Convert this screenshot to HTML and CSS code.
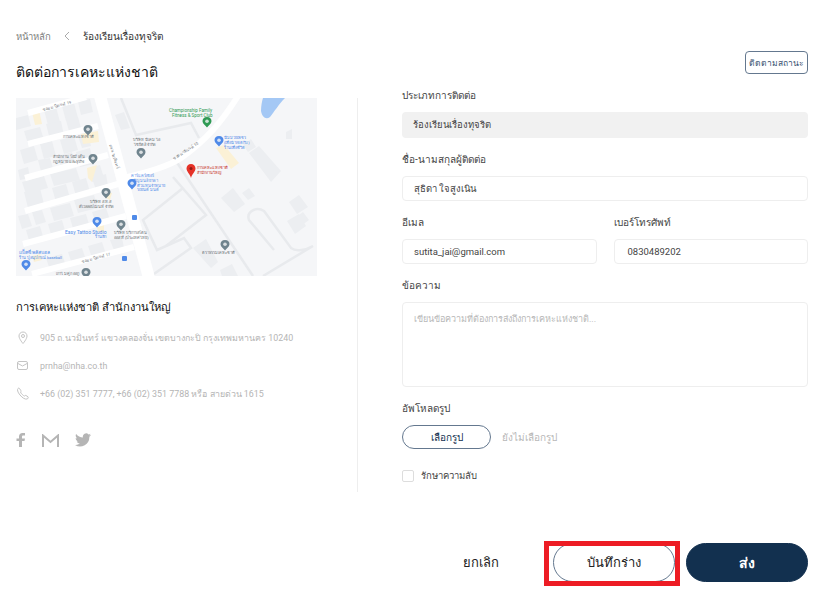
FILE: index.html
```html
<!DOCTYPE html>
<html lang="th">
<head>
  <meta charset="UTF-8" />
  <meta name="viewport" content="width=device-width, initial-scale=1.0"/>
  <title>ติดต่อการเคหะแห่งชาติ</title>
  <link rel="stylesheet" href="styles.css">
</head>
<body>
  <nav class="crumbs">
    <span class="crumb-home">หน้าหลัก</span>
    <svg class="crumb-sep" width="6" height="10" viewBox="0 0 6 10"><path d="M5 1 1 5l4 4"/></svg>
    <span class="crumb-here">ร้องเรียนเรื่องทุจริต</span>
  </nav>

  <main class="page">
    <section class="side">
      <h1 class="title">ติดต่อการเคหะแห่งชาติ</h1>
      <div class="side-body">
        <svg class="map" width="301" height="178" viewBox="0 0 301 178">
          <defs>
            <path id="pin" d="M0 0C-3 0-4.500 2-4.500 4.200-4.500 6.500-1.500 8.500 0 10.500 1.500 8.500 4.500 6.500 4.500 4.200 4.500 2 3 0 0 0Z"/>
            <g id="pin-dot"><use href="#pin"/><circle cx="0" cy="4.200" r="1.800" fill="#f5f6f8" fill-opacity=".8"/></g>
          </defs>
          <rect class="m-bg" width="301" height="178"/>
          <!-- blocks -->
          <g class="m-block">
            <path d="M0 20 12 17 15 28 0 32Z M28 12 40 9 44 24 32 27Z M46 8 58 5 62 20 50 23Z M62 4 74 1 77 14 65 17Z"/>
            <path d="M8 33 24 29 28 42 12 46Z M30 26 45 23 48 38 34 42Z M50 22 62 19 66 34 54 37Z"/>
            <path d="M4 52 18 48 22 62 8 66Z M24 46 36 43 40 58 28 61Z M44 42 58 38 62 52 48 56Z M62 38 72 35 75 48 66 50Z"/>
            <path d="M2 72 12 69 14 80 4 82Z M22 62 34 60 38 74 26 77Z M42 58 56 54 60 68 46 72Z M60 54 74 50 78 66 64 69Z"/>
            <path d="M6 84 28 78 32 90 10 96Z M34 76 60 70 64 82 38 88Z M72 70 84 67 88 80 76 84Z"/>
            <path d="M2 118 12 116 16 128 6 131Z M16 114 26 112 30 124 20 127Z M34 110 54 105 58 118 38 123Z M58 102 78 97 82 110 62 115Z"/>
            <path d="M8 94 24 90 28 106 12 110Z M36 90 50 86 54 100 40 104Z M56 84 70 80 74 94 60 98Z M76 80 90 76 92 88 80 92Z"/>
            <path d="M10 132 24 128 28 142 14 146Z M32 126 46 122 50 136 36 140Z M54 120 70 116 74 130 58 134Z M76 114 90 110 94 122 80 126Z"/>
            <path d="M30 160 46 156 50 168 34 172Z M52 154 66 150 70 162 56 166Z M72 148 86 144 90 156 76 160Z M94 142 106 140 108 150 98 152Z"/>
            <path d="M99 17 108 14 114 30 105 32Z"/>
            <path d="M205 100 217 90 229 106 218 114Z M177 150 190 141 202 164 195 170Z M204 172 216 166 222 178 206 178Z"/>
            <path d="M226 95 233 90 239 98 232 102Z M273 104 283 97 292 109 281 116Z M279 120 287 114 293 122 285 128Z"/>
            <path d="M227 47 235 41 240 49 232 54Z M233 55 243 48 265 73 255 84Z M271 123 283 116 290 128 279 136Z"/>
            <path d="M270 34 276 31 276 41 270 41Z"/>
          </g>
          <!-- yellow lots -->
          <g class="m-lot">
            <path d="M16 14 23 12 26 26 19 27Z M65 36 82 33 83 44 67 46Z M71 70 81 67 76 84 72 80Z"/>
            <path d="M90 94 96 95 94 102 90 100Z M80 126 88 125 88 134 82 134Z"/>
            <path d="M200 50 208 47 223 65 215 71Z"/>
            <path d="M16 158 24 156 26 162 18 164Z"/>
          </g>
          <!-- minor roads -->
          <g class="m-minor">
            <path d="M105 0 120 37 175 25 183 40"/>
            <path d="M160 63 237 178"/>
            <path d="M157 79 190 117 150 148"/>
            <path d="M167 90 127 122 141 152 168 140 175 150 135 178"/>
          </g>
          <path class="m-minor" d="M258 152 233 122C230 114 240 108 248 113L275 150C280 154 290 152 297 148L247 178"/>
          <!-- main roads -->
          <path class="m-road-wide" d="M84 -2 133 180"/>
          <path class="m-road" d="M222 -2C205 25 190 42 165 60 150 70 125 76 107 80"/>
          <g class="m-road">
            <path d="M12 15 70 -1"/>
            <path d="M12 46 82 28"/>
            <path d="M9 80 92 57"/>
            <path d="M9 113 102 86"/>
            <path d="M7 146 110 118"/>
            <path d="M16 176 118 149"/>
          </g>
          <path class="m-water" d="M247 0H269C263 6 258 14 254 19 250 22 246 19 245 13 245 8 246 3 247 0Z"/>
          <!-- labels -->
          <g class="m-road-label">
            <text transform="translate(27 13) rotate(-15)">ซอย มาลีนนท์ 19</text>
            <text transform="translate(93 47) rotate(72)">ถนน ร่มเย็นทร์</text>
            <text transform="translate(158 62) rotate(-33)">ซอย มาลีนนท์ 10</text>
            <text transform="translate(66 165) rotate(-15)">ซอย มาลีนนท์ 17</text>
          </g>
          <g class="m-gray">
            <text x="47" y="40">การเคหะแห่งชาติ</text>
            <text x="37" y="60">สำนักงาน โฮมี เด้น</text>
            <text x="37" y="65">กฎหมาย และธุรกิจ</text>
            <text x="117" y="43">บริษัท นิเคม ไอ</text>
            <text x="118" y="48">ไซยีตส์ จำกัด</text>
            <text x="74" y="105">บริษัท ส.ท.ส</text>
            <text x="63" y="110">ดีเวลลอปเมนท์ จำกัด</text>
            <text x="98" y="136">บริษัท บริการสโตน</text>
            <text x="98" y="141">ออส ที (ประเทศไทย)</text>
            <text x="186" y="156">ตราธรรมเคหะชาติ</text>
            <text x="40" y="177">เกาไ มศูก ออกู</text>
          </g>
          <g class="m-blue">
            <text x="115" y="79">คาร์แคร์เซอร์</text>
            <text x="115" y="84">เจริญ มนส์ ยาดา</text>
            <text x="121" y="89">ตัวแทนจำหน่าย</text>
            <text x="121" y="93">รถยนต์ มนต์</text>
            <text x="208" y="41">นิมม่วยเพชร</text>
            <text x="208" y="46">(เพื่อนำเขตกับ)</text>
            <text x="208" y="51">ร้านเพื่อชีวิต</text>
            <text class="m-blue-big" x="49" y="136">Easy Tattoo Studio</text>
            <text x="79" y="140">ร้านสัก</text>
            <text class="m-blue-big" x="3" y="156">แบ็คซี่ พลัสบอล</text>
            <text x="3" y="161">ร้าน ปูลนุปกรณ์ baseball</text>
          </g>
          <g class="m-green">
            <text x="153" y="14">Championship Family</text>
            <text x="156" y="18.500">Fitness &amp; Sport Club</text>
          </g>
          <g class="m-red">
            <text x="181" y="71">การเคหะแห่งชาติ</text>
            <text x="181" y="76">สำนักงานใหญ่</text>
          </g>
          <!-- pins -->
          <g class="m-pin-gray">
            <use href="#pin-dot" x="72" y="27"/>
            <use href="#pin-dot" x="77" y="56"/>
            <use href="#pin-dot" x="125" y="50"/>
            <use href="#pin-dot" x="90" y="90"/>
            <use href="#pin-dot" x="105" y="122"/>
            <use href="#pin-dot" x="209" y="142"/>
            <use href="#pin-dot" x="70" y="170"/>
          </g>
          <use class="m-pin-green" href="#pin-dot" x="191" y="19"/>
          <g class="m-pin-blue">
            <use href="#pin-dot" x="203" y="38"/>
            <use href="#pin-dot" x="116" y="81"/>
            <use href="#pin-dot" x="81" y="119"/>
            <use href="#pin-dot" x="10" y="162"/>
            <rect x="116" y="117" width="5" height="5" rx="1"/>
            <rect x="106" y="158" width="5" height="5" rx="1"/>
          </g>
          <path class="m-pin-red" d="M175 66C172.500 66 170.500 68 170.500 70.500 170.500 73.500 174 76 175 80 176 76 179.500 73.500 179.500 70.500 179.500 68 177.500 66 175 66Z"/>
          <circle class="m-pin-dot" cx="175" cy="70.500" r="1.500"/>
        </svg>

        <h2 class="office">การเคหะแห่งชาติ สำนักงานใหญ่</h2>
        <ul class="contact">
          <li>
            <svg class="contact-icon" width="14" height="14" viewBox="0 0 14 14"><path d="M7 1C4.500 1 3 3 3 5 3 8 7 12.500 7 12.500S11 8 11 5C11 3 9.500 1 7 1Z"/><circle cx="7" cy="5" r="1.500"/></svg>
            <span>905 ถ.นวมินทร์ แขวงคลองจั่น เขตบางกะปิ กรุงเทพมหานคร 10240</span>
          </li>
          <li>
            <svg class="contact-icon" width="14" height="14" viewBox="0 0 14 14"><rect x="1.500" y="2.500" width="10" height="8" rx="1.500"/><path d="M2 4.500 6.500 7 11 4.500"/></svg>
            <span>prnha@nha.co.th</span>
          </li>
          <li>
            <svg class="contact-icon" width="14" height="14" viewBox="0 0 14 14"><path d="M2 1.500C1 2.500 1.500 5 4 8s5 4.500 7 4c1.200-.3 1.500-1.500 1-2.200L10 8.500c-.5-.3-1 0-1.500.5C7.500 9 5 6.500 4.500 5c.5-.5.700-1 .3-1.500L3.500 1.500C3.100 1 2.500 1 2 1.500Z"/></svg>
            <span>+66 (02) 351 7777, +66 (02) 351 7788 หรือ สายด่วน 1615</span>
          </li>
        </ul>
        <div class="social">
          <svg width="10" height="14" viewBox="0 0 10 14"><path d="M3 14V8H.5V5.500H3V3.500C3 1.200 4.400 0 6.400 0H9v2.500H7.400C6.400 2.500 6 3 6 3.800v1.700h3L8.500 8H6v6Z"/></svg>
          <svg width="17" height="13" viewBox="0 0 17 13"><path class="social-m" d="M1 13V1.500L8.500 8 16 1.500V13"/></svg>
          <svg width="16" height="14" viewBox="0 0 24 20"><path d="M24 2.400c-.9.400-1.800.7-2.800.8 1-.6 1.800-1.600 2.200-2.700-1 .6-2 1-3.100 1.200A4.900 4.900 0 0 0 11.900 6.200C7.800 6 4.200 4 1.700.9c-1.300 2.300-.6 5.200 1.500 6.600-.8 0-1.600-.2-2.200-.6 0 2.400 1.700 4.500 3.900 5-.7.200-1.500.2-2.200.1.600 2 2.400 3.400 4.600 3.400A9.900 9.900 0 0 1 0 17.400 14 14 0 0 0 21.500 5c1-.7 1.800-1.600 2.500-2.600Z"/></svg>
        </div>
      </div>
    </section>

    <section class="main-col">
      <div class="status-row"><button class="status-btn" type="button">ติดตามสถานะ</button></div>
      <form class="form">
        <div class="field">
          <label>ประเภทการติดต่อ</label>
          <div class="box box-off">ร้องเรียนเรื่องทุจริต</div>
        </div>
        <div class="field">
          <label>ชื่อ-นามสกุลผู้ติดต่อ</label>
          <div class="box">สุธิดา ใจสูงเนิน</div>
        </div>
        <div class="field-row">
          <div class="field">
            <label>อีเมล</label>
            <div class="box">sutita_jai@gmail.com</div>
          </div>
          <div class="field">
            <label>เบอร์โทรศัพท์</label>
            <div class="box box-phone">0830489202</div>
          </div>
        </div>
        <div class="field">
          <label>ข้อความ</label>
          <div class="box box-area">เขียนข้อความที่ต้องการส่งถึงการเคหะแห่งชาติ...</div>
        </div>
        <div class="field">
          <label>อัพโหลดรูป</label>
          <div class="upload">
            <button class="pick-btn" type="button">เลือกรูป</button>
            <span class="pick-note">ยังไม่เลือกรูป</span>
          </div>
        </div>
        <div class="secret">
          <span class="check"></span>
          <span>รักษาความลับ</span>
        </div>
      </form>
      <div class="actions">
        <button class="act act-cancel" type="button">ยกเลิก</button>
        <div class="draft-wrap">
          <button class="act act-draft" type="button">บันทึกร่าง</button>
          <span class="red-mark"></span>
        </div>
        <button class="act act-send" type="button">ส่ง</button>
      </div>
    </section>
  </main>
</body>
</html>
```

FILE: styles.css
```css
* {
  box-sizing: border-box;
}

body {
  margin: 0;
  height: 610px;
  overflow: hidden;
  background: #fff;
  color: #222;
  font-family: "Roboto", "Noto Sans", sans-serif;
  font-size: 10px;
}

.crumbs {
  display: flex;
  align-items: center;
  height: 14px;
  margin: 29px 0 0 16px;
}

.crumb-home {
  color: #808080;
  font-size: 9.500px;
}

.crumb-sep {
  margin: 0 13px;
  fill: none;
  stroke: #aaa;
}

.crumb-here {
  color: #333;
  font-size: 10.100px;
}

.page {
  display: flex;
  gap: 44px;
  padding: 8px 28px 0 16px;
}

.side {
  width: 342px;
}

.title {
  height: 47px;
  margin: 0;
  padding-top: 11px;
  color: #111;
  font-size: 14px;
  font-weight: 500;
  line-height: 20px;
}

.side-body {
  height: 394px;
  border-right: 1px solid #eee;
}

.map {
  display: block;
}

.m-bg {
  fill: #f5f6f8;
}

.m-block {
  fill: #eceef1;
}

.m-lot {
  fill: #fbf1d6;
}

.m-minor {
  fill: none;
  stroke: #e8eaed;
  stroke-width: 2.500;
}

.m-road, .m-road-wide {
  fill: none;
  stroke: #fff;
  stroke-width: 6;
}

.m-road-wide {
  stroke-width: 12;
}

.m-water {
  fill: #a4c8f5;
}

.m-road-label text, .m-gray text, .m-blue text, .m-green text, .m-red text {
  font-family: "Roboto", sans-serif;
  font-size: 4px;
}

.m-road-label, .m-gray {
  fill: #6d7378;
}

.m-blue {
  fill: #4f8ae8;
}

.m-blue .m-blue-big {
  font-size: 5px;
}

.m-green {
  fill: #2f9a54;
}

.m-green text {
  font-size: 4.500px;
}

.m-red {
  fill: #c5302a;
}

.m-pin-gray {
  fill: #70848e;
}

.m-pin-green {
  fill: #2f9a54;
}

.m-pin-blue {
  fill: #4f8ae8;
}

.m-pin-red {
  fill: #e53228;
}

.m-pin-dot {
  fill: #8e1c16;
}

.office {
  margin: 23px 0 0;
  color: #111;
  font-size: 11.200px;
  font-weight: 500;
  line-height: 18px;
}

.contact {
  margin: 7px 0 0;
  padding: 0;
  list-style: none;
  color: #b5b5b5;
  font-size: 8.900px;
}

.contact li {
  display: flex;
  align-items: center;
  gap: 10px;
  height: 28px;
}

.contact-icon {
  flex: none;
  fill: none;
  stroke: #c4c4c4;
}

.social {
  display: flex;
  align-items: center;
  gap: 16px;
  margin-top: 25px;
}

.social svg {
  fill: #b5b5b5;
}

.social .social-m {
  fill: none;
  stroke: #b5b5b5;
  stroke-width: 2;
}

.main-col {
  width: 406px;
}

.status-row {
  display: flex;
  justify-content: flex-end;
  height: 37px;
}

.status-btn {
  width: 63px;
  height: 23px;
  padding: 0;
  border: 1px solid #64788f;
  border-radius: 4px;
  background: #fff;
  color: #3a5272;
  font: inherit;
  font-size: 8.500px;
}

.form {
  display: flex;
  flex-direction: column;
  gap: 14px;
}

.field {
  display: flex;
  flex-direction: column;
  flex: 1;
}

.field label {
  height: 24px;
  color: #444;
  line-height: 16px;
}

.field-row {
  display: flex;
  gap: 17px;
}

.box {
  height: 25px;
  padding: 0 11px;
  border: 1px solid #eee;
  border-radius: 4px;
  color: #444;
  font-size: 9.500px;
  line-height: 23px;
}

.box-off {
  height: 26px;
  border: 0;
  background: #f1f1f1;
  line-height: 26px;
}

.box-phone {
  padding-left: 13px;
}

.box-area {
  height: 85px;
  padding-top: 5px;
  color: #b8b8b8;
  font-size: 9px;
}

.upload {
  display: flex;
  align-items: center;
  gap: 11px;
}

.pick-btn {
  width: 89px;
  height: 24px;
  padding: 0;
  border: 1px solid #64788f;
  border-radius: 12px;
  background: #fff;
  color: #12304f;
  font: inherit;
}

.pick-note {
  color: #b8b8b8;
}

.secret {
  display: flex;
  align-items: center;
  gap: 7px;
  margin-top: 5px;
  color: #444;
  font-size: 9.500px;
}

.check {
  width: 12px;
  height: 12px;
  border: 1px solid #ddd;
  border-radius: 2px;
}

.actions {
  display: flex;
  justify-content: flex-end;
  gap: 11px;
  margin-top: 60px;
}

.act {
  width: 122px;
  height: 39px;
  padding: 0;
  border: 1px solid #64788f;
  border-radius: 20px;
  background: #fff;
  color: #222;
  font: inherit;
  font-size: 13px;
  font-weight: 500;
}

.act-cancel {
  border-color: transparent;
}

.act-send {
  background: #12304f;
  border-color: #12304f;
  color: #fff;
  font-size: 14px;
  font-weight: 600;
}

.draft-wrap {
  position: relative;
}

.red-mark {
  position: absolute;
  top: -2px;
  left: -9px;
  width: 136px;
  height: 45px;
  border: 5px solid #ed1c24;
}
```
